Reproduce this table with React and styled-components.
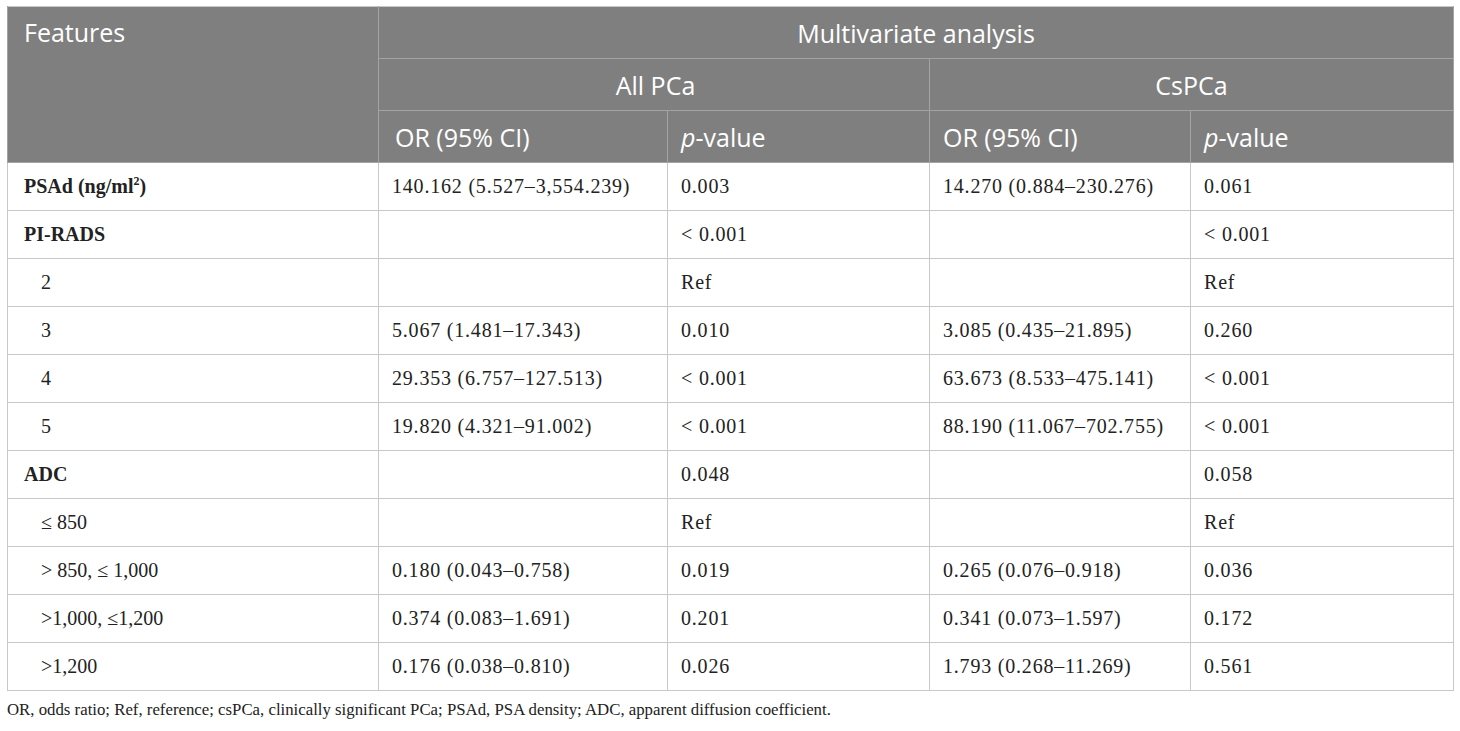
import React from "react";
import styled, { createGlobalStyle } from "styled-components";

const GlobalStyle = createGlobalStyle`
  html, body {
    margin: 0;
    padding: 0;
    background: #ffffff;
  }
`;

const rows = [
  { label: <b>PSAd (ng/ml<sup>2</sup>)</b>, cells: ["140.162 (5.527–3,554.239)", "0.003", "14.270 (0.884–230.276)", "0.061"] },
  { label: <b>PI-RADS</b>, cells: ["", "< 0.001", "", "< 0.001"] },
  { label: "2", indent: true, cells: ["", "Ref", "", "Ref"] },
  { label: "3", indent: true, cells: ["5.067 (1.481–17.343)", "0.010", "3.085 (0.435–21.895)", "0.260"] },
  { label: "4", indent: true, cells: ["29.353 (6.757–127.513)", "< 0.001", "63.673 (8.533–475.141)", "< 0.001"] },
  { label: "5", indent: true, cells: ["19.820 (4.321–91.002)", "< 0.001", "88.190 (11.067–702.755)", "< 0.001"] },
  { label: <b>ADC</b>, cells: ["", "0.048", "", "0.058"] },
  { label: "≤ 850", indent: true, cells: ["", "Ref", "", "Ref"] },
  { label: "> 850, ≤ 1,000", indent: true, cells: ["0.180 (0.043–0.758)", "0.019", "0.265 (0.076–0.918)", "0.036"] },
  { label: ">1,000, ≤1,200", indent: true, cells: ["0.374 (0.083–1.691)", "0.201", "0.341 (0.073–1.597)", "0.172"] },
  { label: ">1,200", indent: true, cells: ["0.176 (0.038–0.810)", "0.026", "1.793 (0.268–11.269)", "0.561"] },
];

const App = () => {
  return (
    <Page>
      <GlobalStyle />
      <Table>
        <colgroup>
          <col style={{ width: 371 }} />
          <col style={{ width: 289 }} />
          <col style={{ width: 262 }} />
          <col style={{ width: 261 }} />
          <col style={{ width: 263 }} />
        </colgroup>
        <thead>
          <tr>
            <HeadCell rowSpan={3} $top>Features</HeadCell>
            <HeadCell colSpan={4} $center>Multivariate analysis</HeadCell>
          </tr>
          <tr>
            <HeadCell colSpan={2} $center>All PCa</HeadCell>
            <HeadCell colSpan={2} $center>CsPCa</HeadCell>
          </tr>
          <tr>
            <HeadCell>OR (95% CI)</HeadCell>
            <HeadCell><i>p</i>-value</HeadCell>
            <HeadCell>OR (95% CI)</HeadCell>
            <HeadCell><i>p</i>-value</HeadCell>
          </tr>
        </thead>
        <tbody>
          {rows.map((row, i) => (
            <tr key={i}>
              <Cell $indent={row.indent}>{row.label}</Cell>
              {row.cells.map((c, j) => (
                <Cell key={j} $numeric>{c}</Cell>
              ))}
            </tr>
          ))}
        </tbody>
      </Table>
      <Footnote>
        OR, odds ratio; Ref, reference; csPCa, clinically significant PCa; PSAd, PSA density; ADC, apparent diffusion coefficient.
      </Footnote>
    </Page>
  );
};

const Page = styled.div`
  padding: 6px 7px 0 7px;
  width: 1446px;
`;

const Table = styled.table`
  width: 1446px;
  border-collapse: collapse;
  table-layout: fixed;
  border: 1px solid #c8c8c8;
`;

const HeadCell = styled.th`
  height: 51px;
  padding: 0 13px;
  background: #7f7f7f;
  color: #ffffff;
  font-family: "Open Sans", sans-serif;
  font-weight: 400;
  font-size: 25px;
  text-align: ${(p) => (p.$center ? "center" : "left")};
  vertical-align: ${(p) => (p.$top ? "top" : "middle")};
  padding-top: ${(p) => (p.$top ? "10px" : "0")};
  border: 1px solid #a3a3a3;
  border-top: none;
  line-height: 1.2;

  &:first-child {
    padding-left: 16px;
  }
`;

const Cell = styled.td`
  height: 47px;
  padding: 0 13px;
  font-family: "Liberation Serif", "Times New Roman", serif;
  font-size: 20px;
  letter-spacing: ${(p) => (p.$numeric ? "0.8px" : "0")};
  color: #222222;
  border: 1px solid #c8c8c8;
  vertical-align: middle;
  white-space: nowrap;

  &:first-child {
    padding-left: ${(p) => (p.$indent ? "33px" : "16px")};
  }

  sup {
    font-size: 12px;
    vertical-align: 8px;
    line-height: 0;
  }
`;

const Footnote = styled.p`
  margin: 9px 0 0 0;
  font-family: "Liberation Serif", "Times New Roman", serif;
  font-size: 16.8px;
  color: #222222;
`;

export default App;
